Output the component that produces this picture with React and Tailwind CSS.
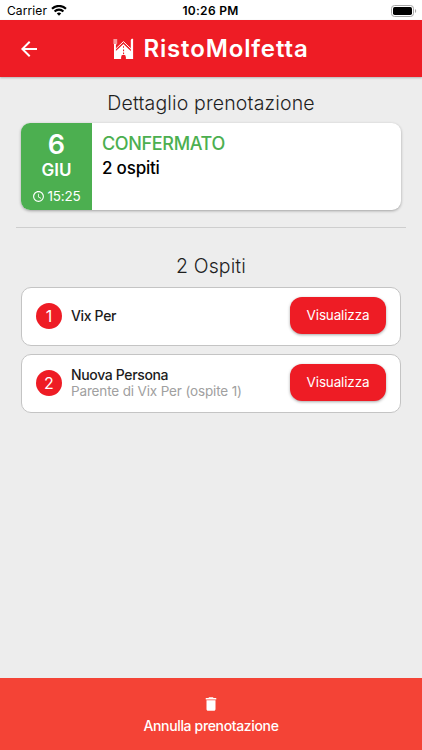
import React from 'react';
import { MdArrowBack, MdAccessTime, MdDelete } from 'react-icons/md';

const guests = [
  { id: 1, name: 'Vix Per' },
  {
    id: 2,
    name: 'Nuova Persona',
    relation: 'Parente di Vix Per (ospite 1)',
  },
];

function StatusBar() {
  return (
    <div className="h-5 shrink-0 bg-white grid grid-cols-3 items-center pl-[7px] pr-[5px] text-black">
      <div className="flex items-center gap-1">
        <span className="text-[12px] leading-5 tracking-[0.1px] pt-px">Carrier</span>
        <svg width="16" height="11" viewBox="0 0 16 11" className="mb-px">
          <path d="M8 10.8 5.8 8.5a3.1 3.1 0 0 1 4.4 0Z" />
          <g fill="none" stroke="currentColor" strokeWidth="2.1">
            <path d="M3.6 6.5a6.2 6.2 0 0 1 8.8 0" />
            <path d="M1 3.8a9.9 9.9 0 0 1 14 0" />
          </g>
        </svg>
      </div>
      <span className="text-center text-[12px] leading-5 font-semibold tracking-[0.3px] whitespace-nowrap pt-px -ml-[3px]">
        10:26 PM
      </span>
      <svg width="26" height="12" viewBox="0 0 26 12" className="justify-self-end">
        <rect x="0.5" y="0.5" width="22" height="11" rx="3" fill="none" stroke="#a6a6a6" />
        <rect x="2" y="2" width="19" height="8" rx="1.7" />
        <path d="M24 4c1.6.6 1.6 3.4 0 4Z" fill="#a6a6a6" />
      </svg>
    </div>
  );
}

function Logo() {
  return (
    <svg width="21" height="22" viewBox="0 0 21 22" fill="#fff">
      {/* Forchetta e coltello */}
      <path d="M.4 1h3.8v4.6L3.2 7H1.4l-1-1.4Z" opacity=".55" />
      <path d="M1 6h1.9v15H1Z" />
      <path d="M17.8 2c.4-1.2 1.7-1.4 2.3-1v20h-2.3Z" />
      {/* Tetto */}
      <path
        d="m2.5 11.2 7.9-7.6 8 7.6"
        fill="none"
        stroke="#fff"
        strokeWidth="1"
      />
      <path d="m10.4 6 8.4 8V21h-5.9v-1.8a2.4 2.4 0 0 0-4.8 0V21H1.8v-7Z" />
      <path d="M10 8.2h1v1.6h-1zM10 11.4h1.1v1.8H10zM10 14.6h1.1v1.4H10z" fill="#ee1c25" />
    </svg>
  );
}

function Header() {
  return (
    <header className="h-[57px] shrink-0 bg-[#ee1c25] text-white grid grid-cols-[56px_1fr_56px] items-center shadow-[0_1px_2px_rgba(0,0,0,0.25)]">
      <MdArrowBack className="size-6 ml-[17px]" />
      <div className="flex items-center justify-center gap-[9px]">
        <Logo />
        <h1 className="text-[24px] leading-8 font-semibold tracking-[0.85px] whitespace-nowrap">
          RistoMolfetta
        </h1>
      </div>
    </header>
  );
}

function BookingCard() {
  return (
    <section className="flex h-[87px] mx-[21px] mt-2 rounded-[9px] overflow-hidden bg-white shadow-[0_1px_3px_rgba(0,0,0,0.32)]">
      <div className="w-[71px] bg-[#4caf50] text-white flex flex-col items-center">
        <span className="text-[27px] leading-7 font-semibold mt-2">6</span>
        <span className="text-[17px] leading-5 font-semibold mt-px tracking-[0.1px]">GIU</span>
        <span className="flex items-center gap-0.5 mt-[7px] text-[13.5px] leading-[18px] tracking-[-0.2px]">
          <MdAccessTime className="size-[13px]" />
          15:25
        </span>
      </div>
      <div className="pl-[10px] pt-[9px]">
        <p className="text-[18px] leading-6 tracking-[-0.35px] text-[#4caf50] font-medium">CONFERMATO</p>
        <p className="text-[17px] leading-6 tracking-[-0.2px] text-black font-medium">2 ospiti</p>
      </div>
    </section>
  );
}

function GuestRow({ guest }) {
  return (
    <li className="flex items-center h-[59px] rounded-[10px] border border-[#c4c4c4] bg-white pl-[14px] pr-[14px] pb-0.5">
      <span className="size-[26px] rounded-full bg-[#ee1c25] text-white text-[16px] leading-[26px] text-center">
        {guest.id}
      </span>
      <div className="flex-1 ml-[9px] whitespace-nowrap">
        <p className="text-[14px] leading-[17px] tracking-[-0.35px] font-medium text-[#1c1c1c]">{guest.name}</p>
        {guest.relation && (
          <p className="text-[13.5px] leading-[17px] tracking-[-0.15px] text-[#a0a0a0]">{guest.relation}</p>
        )}
      </div>
      <button className="w-24 h-[37px] rounded-[12px] bg-[#ee1c25] text-white text-[13.5px] tracking-[-0.15px] shadow-[0_1px_3px_rgba(0,0,0,0.35)]">
        Visualizza
      </button>
    </li>
  );
}

export default function App() {
  return (
    <div className="w-[422px] h-[750px] flex flex-col overflow-hidden bg-[#ededed] font-['Inter',sans-serif]">
      <StatusBar />
      <Header />
      <main className="flex-1 flex flex-col">
        <h2 className="mt-[14px] text-center text-[19.5px] leading-6 tracking-[0.15px] font-light text-[#1f1f1f]">
          Dettaglio prenotazione
        </h2>
        <BookingCard />
        <hr className="mx-4 mt-[17px] border-[#cecece]" />
        <h2 className="mt-[26px] text-center text-[19.5px] leading-6 tracking-[0.1px] font-light text-[#1f1f1f]">
          2 Ospiti
        </h2>
        <ul className="mt-[9px] mx-[21px] flex flex-col gap-2">
          {guests.map(guest => (
            <GuestRow key={guest.id} guest={guest} />
          ))}
        </ul>
      </main>
      <button className="h-[72px] shrink-0 bg-[#f44336] text-white flex flex-col items-center">
        <MdDelete className="size-[18px] mt-[17px]" />
        <span className="mt-1 text-[14px] leading-[18px] tracking-[-0.35px] font-medium">
          Annulla prenotazione
        </span>
      </button>
    </div>
  );
}
